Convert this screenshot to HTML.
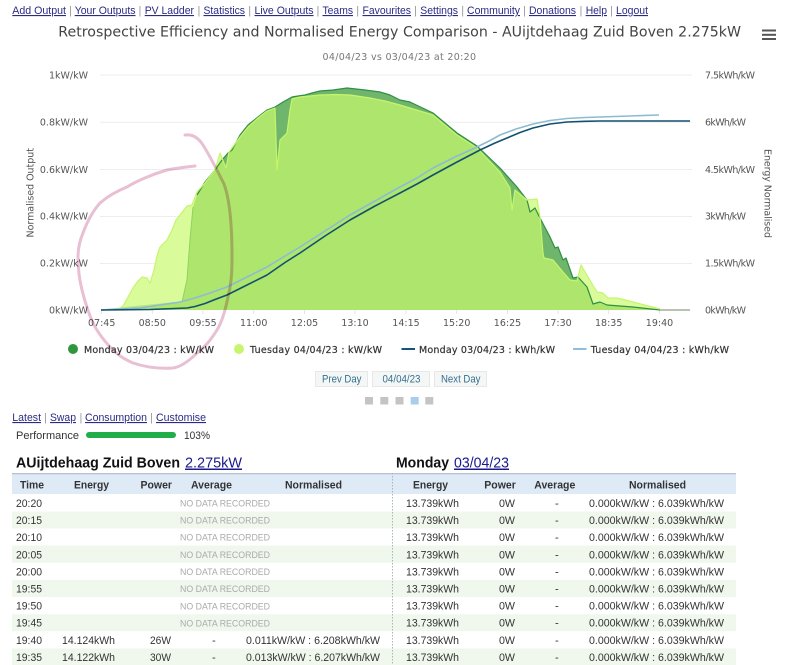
<!DOCTYPE html>
<html><head><meta charset="utf-8"><title>Retrospective Efficiency</title>
<style>
html,body{margin:0;padding:0;background:#fff;width:800px;height:665px;overflow:hidden}
svg{display:block;filter:blur(.25px)}
.n{font:11.2px "Liberation Sans",sans-serif;fill:#2b2b85;text-decoration:underline}
.s{font:11px "Liberation Sans",sans-serif;fill:#999}
.d{font:9.5px "DejaVu Sans",sans-serif;fill:#555}
.l{font:9.5px "DejaVu Sans",sans-serif;fill:#333}
.t{font:11.2px "Liberation Sans",sans-serif;fill:#333}
.h{font:bold 11.2px "Liberation Sans",sans-serif;fill:#333}
.g{font:9.4px "Liberation Sans",sans-serif;fill:#aaa}
.b{font:10.6px "Liberation Sans",sans-serif;fill:#35708f}
.H{font:bold 15px "Liberation Sans",sans-serif;fill:#111}
.A{font:15px "Liberation Sans",sans-serif;fill:#1a1a8c;text-decoration:underline}
</style></head><body>
<svg xmlns="http://www.w3.org/2000/svg" width="800" height="665" viewBox="0 0 800 665">
<defs>
<clipPath id="m"><path d="M101 310L130 307 160 304 182 302 187 280 190 240 193 207 197 195 205 182 215 170 222 160 228 153 232 150 240 135 248 125 258 117 267 110 275 107 283 102 292 97 298 96 305 95 312 93 320 91 333 90 347 88 356 89 365 90 380 92 390 95 400 100 410 102 433 113 457 133 477 146 500 168 517 187 527 200 530 212 535 208 540 218 550 237 555 248 558 247 563 260 566 258 573 278 578 277 587 287 593 304 600 302 607 305 633 307 660 310 690 310Z"/></clipPath>
</defs>

<!-- nav -->
<text class="n" x="12.3" y="14" textLength="53.7" lengthAdjust="spacingAndGlyphs">Add Output</text><text class="s" x="69" y="14">|</text>
<text class="n" x="74.7" y="14" textLength="60.8" lengthAdjust="spacingAndGlyphs">Your Outputs</text><text class="s" x="138.5" y="14">|</text>
<text class="n" x="144.7" y="14" textLength="49.3" lengthAdjust="spacingAndGlyphs">PV Ladder</text><text class="s" x="197.5" y="14">|</text>
<text class="n" x="203.5" y="14" textLength="41.5" lengthAdjust="spacingAndGlyphs">Statistics</text><text class="s" x="248.3" y="14">|</text>
<text class="n" x="254.5" y="14" textLength="59" lengthAdjust="spacingAndGlyphs">Live Outputs</text><text class="s" x="316.5" y="14">|</text>
<text class="n" x="322.5" y="14" textLength="30.5" lengthAdjust="spacingAndGlyphs">Teams</text><text class="s" x="356.3" y="14">|</text>
<text class="n" x="362.5" y="14" textLength="48.5" lengthAdjust="spacingAndGlyphs">Favourites</text><text class="s" x="414" y="14">|</text>
<text class="n" x="420.3" y="14" textLength="37.7" lengthAdjust="spacingAndGlyphs">Settings</text><text class="s" x="461.3" y="14">|</text>
<text class="n" x="467" y="14" textLength="53" lengthAdjust="spacingAndGlyphs">Community</text><text class="s" x="523" y="14">|</text>
<text class="n" x="529" y="14" textLength="47" lengthAdjust="spacingAndGlyphs">Donations</text><text class="s" x="579.5" y="14">|</text>
<text class="n" x="585.7" y="14" textLength="21.3" lengthAdjust="spacingAndGlyphs">Help</text><text class="s" x="610" y="14">|</text>
<text class="n" x="616" y="14" textLength="32" lengthAdjust="spacingAndGlyphs">Logout</text>

<!-- title -->
<text x="58.3" y="36.5" textLength="682.7" lengthAdjust="spacingAndGlyphs" style="font:14.5px 'DejaVu Sans',sans-serif;fill:#444">Retrospective Efficiency and Normalised Energy Comparison - AUijtdehaag Zuid Boven 2.275kW</text>
<text x="322.5" y="60" textLength="153.5" style="font:9.5px 'DejaVu Sans',sans-serif;fill:#777">04/04/23 vs 03/04/23 at 20:20</text>
<g fill="#555"><rect x="762" y="29.5" width="14" height="2"/><rect x="762" y="33.8" width="14" height="2"/><rect x="762" y="38" width="14" height="2"/></g>

<!-- grid -->
<g stroke="#eeeeee" stroke-width="1">
<path d="M100 75H692M100 122.2H692M100 169.5H692M100 216.5H692M100 263.5H692"/>
</g>
<path d="M101.5 310V314M152.3 310V314M203 310V314M253.7 310V314M304.5 310V314M355 310V314M406 310V314M456.7 310V314M507.5 310V314M558 310V314M608.7 310V314M659.5 310V314" stroke="#e4e4e4"/>

<!-- y labels -->
<g class="d">
<text class="d" x="88" y="78.5" text-anchor="end">1kW/kW</text>
<text class="d" x="88" y="125.7" text-anchor="end">0.8kW/kW</text>
<text class="d" x="88" y="173" text-anchor="end">0.6kW/kW</text>
<text class="d" x="88" y="219.5" text-anchor="end">0.4kW/kW</text>
<text class="d" x="88" y="266.7" text-anchor="end">0.2kW/kW</text>
<text class="d" x="88" y="313.7" text-anchor="end">0kW/kW</text>
<text class="d" x="705" y="78.5" textLength="50">7.5kWh/kW</text>
<text class="d" x="705" y="125.7" textLength="41">6kWh/kW</text>
<text class="d" x="705" y="173" textLength="50">4.5kWh/kW</text>
<text class="d" x="705" y="219.5" textLength="41">3kWh/kW</text>
<text class="d" x="705" y="266.7" textLength="50">1.5kWh/kW</text>
<text class="d" x="705" y="313.7" textLength="41">0kWh/kW</text>
</g>
<text class="d" transform="translate(33.5,237.5) rotate(-90)" textLength="89.5">Normalised Output</text>
<text class="d" transform="translate(764.5,149) rotate(90)" textLength="89">Energy Normalised</text>

<!-- x labels -->
<g text-anchor="middle">
<text class="d" x="101.7" y="326">07:45</text>
<text class="d" x="152.3" y="326">08:50</text>
<text class="d" x="203" y="326">09:55</text>
<text class="d" x="253.7" y="326">11:00</text>
<text class="d" x="304.5" y="326">12:05</text>
<text class="d" x="355" y="326">13:10</text>
<text class="d" x="406" y="326">14:15</text>
<text class="d" x="456.7" y="326">15:20</text>
<text class="d" x="507.5" y="326">16:25</text>
<text class="d" x="558" y="326">17:30</text>
<text class="d" x="608.7" y="326">18:35</text>
<text class="d" x="659.5" y="326">19:40</text>
</g>

<!-- areas -->
<path fill="#6fb56c" d="M101 310L130 307 160 304 182 302 187 280 190 240 193 207 197 195 205 182 215 170 222 160 228 153 232 150 240 135 248 125 258 117 267 110 275 107 283 102 292 97 298 96 305 95 312 93 320 91 333 90 347 88 356 89 365 90 380 92 390 95 400 100 410 102 433 113 457 133 477 146 500 168 517 187 527 200 530 212 535 208 540 218 550 237 555 248 558 247 563 260 566 258 573 278 578 277 587 287 593 304 600 302 607 305 633 307 660 310 690 310Z"/>
<path fill="#d9fb9a" d="M101 310L115 309.5 120 308 123 306 128 297 133 288 138 281 142 277 147 278 150 283 154 270 157 256 160 247 167 240 172 230 176 220 180 215 187 206 192 205 197 192 205 183 215 170 220 153 226 168 229 152 240 137 248 127 258 118 267 111 275 108 277 170 280 140 287 133 290 110 292 99 300 97 310 96 320 95 335 94.5 350 95 370 98 385 101 400 105 433 115 457 135 477 148 500 172 510 188 512 210 515 190 527 200 537 199 540 217 543 253 544 258 553 260 563 272 570 280 577 281 581 265 588 277 597 292 603 293 608 298 617 298 633 302 660 309 660 310Z"/>
<g clip-path="url(#m)"><path fill="#aee56c" d="M101 310L115 309.5 120 308 123 306 128 297 133 288 138 281 142 277 147 278 150 283 154 270 157 256 160 247 167 240 172 230 176 220 180 215 187 206 192 205 197 192 205 183 215 170 220 153 226 168 229 152 240 137 248 127 258 118 267 111 275 108 277 170 280 140 287 133 290 110 292 99 300 97 310 96 320 95 335 94.5 350 95 370 98 385 101 400 105 433 115 457 135 477 148 500 172 510 188 512 210 515 190 527 200 537 199 540 217 543 253 544 258 553 260 563 272 570 280 577 281 581 265 588 277 597 292 603 293 608 298 617 298 633 302 660 309 660 310Z"/></g>
<path fill="none" stroke="#b7e58a" stroke-width="1" d="M101 310L130 307 160 304 182 302"/>
<path fill="none" stroke="#2f8f45" stroke-width="1.2" stroke-linejoin="round" d="M197 195L205 182 215 170 222 160 228 153 232 150 240 135 248 125 258 117 267 110 275 107 283 102 292 97 298 96 305 95 312 93 320 91 333 90 347 88 356 89 365 90 380 92 390 95 400 100 410 102 433 113 457 133 477 146 500 168 517 187 527 200 530 212 535 208 540 218 550 237 555 248 558 247 563 260 566 258 573 278 578 277 587 287 593 304 600 302 607 305 633 307 660 310"/>
<path fill="none" stroke="#8d9f86" stroke-width="1.2" d="M660 310H690"/>
<path fill="none" stroke="#8ed35f" stroke-width="1" d="M182 302L187 280 190 240 193 207"/>
<path fill="none" stroke="#c6f56c" stroke-width="1.2" stroke-linejoin="round" d="M101 310L115 309.5 120 308 123 306 128 297 133 288 138 281 142 277 147 278 150 283 154 270 157 256 160 247 167 240 172 230 176 220 180 215 187 206 192 205 197 192 205 183 215 170 220 153 226 168 229 152 240 137 248 127 258 118 267 111 275 108 277 170 280 140 287 133 290 110 292 99 300 97 310 96 320 95 335 94.5 350 95 370 98 385 101 400 105 433 115 457 135 477 148 500 172 510 188 512 210 515 190 527 200 537 199 540 217 543 253 544 258 553 260 563 272 570 280 577 281 581 265 588 277 597 292 603 293 608 298 617 298 633 302 660 309"/>

<!-- energy lines -->
<path fill="none" stroke="#8dbbd2" stroke-width="1.6" stroke-linejoin="round" d="M101 310L140 308 180 302 195 298 210 293 227 287 247 277 267 267 285 256 300 247 325 231 350 215 375 201 400 187 417 178 433 168 455 157 477 147 490 140.5 500 135 516 129 533 124 550 120.5 567 118.5 585 117.5 600 117 630 116 659 115"/>
<path fill="none" stroke="#12516f" stroke-width="1.6" stroke-linejoin="round" d="M101 310L150 309.5 187 308 195 306.5 205 303.5 215 299.5 227 295 245 286 267 275 285 262.5 300 253 325 236 350 220 375 206 400 193 417 184 433 175 457 162 480 150 495 143 507 138 520 132.5 533 128 550 124 567 122 585 121.3 600 121 690 121"/>

<!-- pink circle -->
<g style="mix-blend-mode:multiply"><path fill="none" stroke="#e8bfd3" stroke-width="3" stroke-linecap="round" stroke-linejoin="round" d="M185 135C192 134 198 137 203 145C210 156 218 172 224 184C230 200 232 230 232 257C232 275 231 285 228 297C225 312 222 322 217 330C210 341 205 347 197 353C188 362 180 367 173 368C158 369 145 367 133 363C122 358 118 355 110 347C103 339 98 333 93 323C88 312 85 302 82 290C79 278 78 268 78 257C78 247 80 240 83 233C87 222 92 212 100 203C108 196 117 191 127 187C135 182 150 175 167 170C177 168 186 167 195 166"/></g>

<!-- legend -->
<circle cx="73" cy="349" r="5" fill="#2f963f"/>
<text class="l" x="84" y="353" textLength="130" stroke="#333" stroke-width=".2">Monday 03/04/23 : kW/kW</text>
<circle cx="239" cy="349" r="5" fill="#c8f56e"/>
<text class="l" x="250" y="353" textLength="132" stroke="#333" stroke-width=".2">Tuesday 04/04/23 : kW/kW</text>
<rect x="401.5" y="348" width="13.5" height="2" fill="#14557a"/>
<text class="l" x="419" y="353" textLength="136" stroke="#333" stroke-width=".2">Monday 03/04/23 : kWh/kW</text>
<rect x="573" y="348" width="13.5" height="2" fill="#8fbfe0"/>
<text class="l" x="590.7" y="353" textLength="138.3" stroke="#333" stroke-width=".2">Tuesday 04/04/23 : kWh/kW</text>

<!-- buttons -->
<g fill="#f5f7f7" stroke="#e8e8e8"><rect x="315.5" y="371.5" width="52" height="15"/><rect x="372.5" y="371.5" width="57" height="15"/><rect x="434.5" y="371.5" width="52" height="15"/></g>
<text class="b" x="322" y="382.5" textLength="39.5" lengthAdjust="spacingAndGlyphs">Prev Day</text>
<text class="b" x="382.5" y="382.5" textLength="38" lengthAdjust="spacingAndGlyphs">04/04/23</text>
<text class="b" x="441" y="382.5" textLength="39.5" lengthAdjust="spacingAndGlyphs">Next Day</text>
<g fill="#c4c4c4"><rect x="365" y="397" width="8" height="7.5"/><rect x="380.3" y="397" width="8" height="7.5"/><rect x="395.5" y="397" width="8" height="7.5"/><rect x="425.3" y="397" width="8" height="7.5"/></g>
<rect x="410.7" y="397" width="8" height="7.5" fill="#a9cdee"/>

<!-- links -->
<text class="n" x="12.3" y="421" textLength="28.7" lengthAdjust="spacingAndGlyphs">Latest</text><text class="s" x="44" y="421">|</text>
<text class="n" x="50" y="421" textLength="26" lengthAdjust="spacingAndGlyphs">Swap</text><text class="s" x="79.5" y="421">|</text>
<text class="n" x="85" y="421" textLength="62" lengthAdjust="spacingAndGlyphs">Consumption</text><text class="s" x="150" y="421">|</text>
<text class="n" x="156" y="421" textLength="50" lengthAdjust="spacingAndGlyphs">Customise</text>
<text class="t" x="16" y="439" textLength="63" lengthAdjust="spacingAndGlyphs">Performance</text>
<rect x="86" y="432" width="90" height="6" rx="3" fill="#22ad4b"/>
<text class="t" x="184" y="439" textLength="26" lengthAdjust="spacingAndGlyphs">103%</text>

<!-- headings -->
<text class="H" x="16" y="467.5" textLength="164" lengthAdjust="spacingAndGlyphs">AUijtdehaag Zuid Boven</text>
<text class="A" x="185" y="467.5" textLength="57" lengthAdjust="spacingAndGlyphs">2.275kW</text>
<text class="H" x="396" y="467.5" textLength="53" lengthAdjust="spacingAndGlyphs">Monday</text>
<text class="A" x="454" y="467.5" textLength="55" lengthAdjust="spacingAndGlyphs">03/04/23</text>

<!-- table -->
<rect x="12" y="473" width="724" height="21" fill="#deebf7"/>
<rect x="12" y="473" width="724" height="1.3" fill="#b9c2cf"/>
<g fill="#f0f8ee">
<rect x="12" y="511.5" width="724" height="17"/>
<rect x="12" y="545.5" width="724" height="17.2"/>
<rect x="12" y="580" width="724" height="17"/>
<rect x="12" y="614.2" width="724" height="17"/>
<rect x="12" y="648.4" width="724" height="16.6"/>
</g>
<path d="M392.5 473V665" stroke="#aab4bd" stroke-dasharray="1.5 1.5"/>
<g lengthAdjust="spacingAndGlyphs">
<text class="h" x="20" y="488.5" textLength="24" lengthAdjust="spacingAndGlyphs">Time</text>
<text class="h" x="74" y="488.5" textLength="35" lengthAdjust="spacingAndGlyphs">Energy</text>
<text class="h" x="140.5" y="488.5" textLength="31.5" lengthAdjust="spacingAndGlyphs">Power</text>
<text class="h" x="191" y="488.5" textLength="41" lengthAdjust="spacingAndGlyphs">Average</text>
<text class="h" x="285" y="488.5" textLength="57" lengthAdjust="spacingAndGlyphs">Normalised</text>
<text class="h" x="413" y="488.5" textLength="35" lengthAdjust="spacingAndGlyphs">Energy</text>
<text class="h" x="484.3" y="488.5" textLength="31.5" lengthAdjust="spacingAndGlyphs">Power</text>
<text class="h" x="534.3" y="488.5" textLength="41" lengthAdjust="spacingAndGlyphs">Average</text>
<text class="h" x="629" y="488.5" textLength="57" lengthAdjust="spacingAndGlyphs">Normalised</text>
</g>

<text class="t" x="16" y="507" textLength="26" lengthAdjust="spacingAndGlyphs">20:20</text><text class="g" x="180" y="506.5" textLength="90" lengthAdjust="spacingAndGlyphs">NO DATA RECORDED</text><text class="t" x="406" y="507" textLength="53" lengthAdjust="spacingAndGlyphs">13.739kWh</text><text class="t" x="499" y="507" textLength="16" lengthAdjust="spacingAndGlyphs">0W</text><text class="t" x="555" y="507">-</text><text class="t" x="589" y="507" textLength="135" lengthAdjust="spacingAndGlyphs">0.000kW/kW : 6.039kWh/kW</text>
<text class="t" x="16" y="524.1" textLength="26" lengthAdjust="spacingAndGlyphs">20:15</text><text class="g" x="180" y="523.6" textLength="90" lengthAdjust="spacingAndGlyphs">NO DATA RECORDED</text><text class="t" x="406" y="524.1" textLength="53" lengthAdjust="spacingAndGlyphs">13.739kWh</text><text class="t" x="499" y="524.1" textLength="16" lengthAdjust="spacingAndGlyphs">0W</text><text class="t" x="555" y="524.1">-</text><text class="t" x="589" y="524.1" textLength="135" lengthAdjust="spacingAndGlyphs">0.000kW/kW : 6.039kWh/kW</text>
<text class="t" x="16" y="541.2" textLength="26" lengthAdjust="spacingAndGlyphs">20:10</text><text class="g" x="180" y="540.7" textLength="90" lengthAdjust="spacingAndGlyphs">NO DATA RECORDED</text><text class="t" x="406" y="541.2" textLength="53" lengthAdjust="spacingAndGlyphs">13.739kWh</text><text class="t" x="499" y="541.2" textLength="16" lengthAdjust="spacingAndGlyphs">0W</text><text class="t" x="555" y="541.2">-</text><text class="t" x="589" y="541.2" textLength="135" lengthAdjust="spacingAndGlyphs">0.000kW/kW : 6.039kWh/kW</text>
<text class="t" x="16" y="558.3" textLength="26" lengthAdjust="spacingAndGlyphs">20:05</text><text class="g" x="180" y="557.8" textLength="90" lengthAdjust="spacingAndGlyphs">NO DATA RECORDED</text><text class="t" x="406" y="558.3" textLength="53" lengthAdjust="spacingAndGlyphs">13.739kWh</text><text class="t" x="499" y="558.3" textLength="16" lengthAdjust="spacingAndGlyphs">0W</text><text class="t" x="555" y="558.3">-</text><text class="t" x="589" y="558.3" textLength="135" lengthAdjust="spacingAndGlyphs">0.000kW/kW : 6.039kWh/kW</text>
<text class="t" x="16" y="575.4" textLength="26" lengthAdjust="spacingAndGlyphs">20:00</text><text class="g" x="180" y="575" textLength="90" lengthAdjust="spacingAndGlyphs">NO DATA RECORDED</text><text class="t" x="406" y="575.4" textLength="53" lengthAdjust="spacingAndGlyphs">13.739kWh</text><text class="t" x="499" y="575.4" textLength="16" lengthAdjust="spacingAndGlyphs">0W</text><text class="t" x="555" y="575.4">-</text><text class="t" x="589" y="575.4" textLength="135" lengthAdjust="spacingAndGlyphs">0.000kW/kW : 6.039kWh/kW</text>
<text class="t" x="16" y="592.5" textLength="26" lengthAdjust="spacingAndGlyphs">19:55</text><text class="g" x="180" y="592.2" textLength="90" lengthAdjust="spacingAndGlyphs">NO DATA RECORDED</text><text class="t" x="406" y="592.5" textLength="53" lengthAdjust="spacingAndGlyphs">13.739kWh</text><text class="t" x="499" y="592.5" textLength="16" lengthAdjust="spacingAndGlyphs">0W</text><text class="t" x="555" y="592.5">-</text><text class="t" x="589" y="592.5" textLength="135" lengthAdjust="spacingAndGlyphs">0.000kW/kW : 6.039kWh/kW</text>
<text class="t" x="16" y="609.6" textLength="26" lengthAdjust="spacingAndGlyphs">19:50</text><text class="g" x="180" y="609.3" textLength="90" lengthAdjust="spacingAndGlyphs">NO DATA RECORDED</text><text class="t" x="406" y="609.6" textLength="53" lengthAdjust="spacingAndGlyphs">13.739kWh</text><text class="t" x="499" y="609.6" textLength="16" lengthAdjust="spacingAndGlyphs">0W</text><text class="t" x="555" y="609.6">-</text><text class="t" x="589" y="609.6" textLength="135" lengthAdjust="spacingAndGlyphs">0.000kW/kW : 6.039kWh/kW</text>
<text class="t" x="16" y="626.7" textLength="26" lengthAdjust="spacingAndGlyphs">19:45</text><text class="g" x="180" y="626.4" textLength="90" lengthAdjust="spacingAndGlyphs">NO DATA RECORDED</text><text class="t" x="406" y="626.7" textLength="53" lengthAdjust="spacingAndGlyphs">13.739kWh</text><text class="t" x="499" y="626.7" textLength="16" lengthAdjust="spacingAndGlyphs">0W</text><text class="t" x="555" y="626.7">-</text><text class="t" x="589" y="626.7" textLength="135" lengthAdjust="spacingAndGlyphs">0.000kW/kW : 6.039kWh/kW</text>
<text class="t" x="16" y="643.8" textLength="26" lengthAdjust="spacingAndGlyphs">19:40</text><text class="t" x="62" y="643.8" textLength="53" lengthAdjust="spacingAndGlyphs">14.124kWh</text><text class="t" x="150" y="643.8" textLength="21" lengthAdjust="spacingAndGlyphs">26W</text><text class="t" x="212" y="643.8">-</text><text class="t" x="246" y="643.8" textLength="134" lengthAdjust="spacingAndGlyphs">0.011kW/kW : 6.208kWh/kW</text><text class="t" x="406" y="643.8" textLength="53" lengthAdjust="spacingAndGlyphs">13.739kWh</text><text class="t" x="499" y="643.8" textLength="16" lengthAdjust="spacingAndGlyphs">0W</text><text class="t" x="555" y="643.8">-</text><text class="t" x="589" y="643.8" textLength="135" lengthAdjust="spacingAndGlyphs">0.000kW/kW : 6.039kWh/kW</text>
<text class="t" x="16" y="660.9" textLength="26" lengthAdjust="spacingAndGlyphs">19:35</text><text class="t" x="62" y="660.9" textLength="53" lengthAdjust="spacingAndGlyphs">14.122kWh</text><text class="t" x="150" y="660.9" textLength="21" lengthAdjust="spacingAndGlyphs">30W</text><text class="t" x="212" y="660.9">-</text><text class="t" x="246" y="660.9" textLength="134" lengthAdjust="spacingAndGlyphs">0.013kW/kW : 6.207kWh/kW</text><text class="t" x="406" y="660.9" textLength="53" lengthAdjust="spacingAndGlyphs">13.739kWh</text><text class="t" x="499" y="660.9" textLength="16" lengthAdjust="spacingAndGlyphs">0W</text><text class="t" x="555" y="660.9">-</text><text class="t" x="589" y="660.9" textLength="135" lengthAdjust="spacingAndGlyphs">0.000kW/kW : 6.039kWh/kW</text>
</svg>
</body></html>
